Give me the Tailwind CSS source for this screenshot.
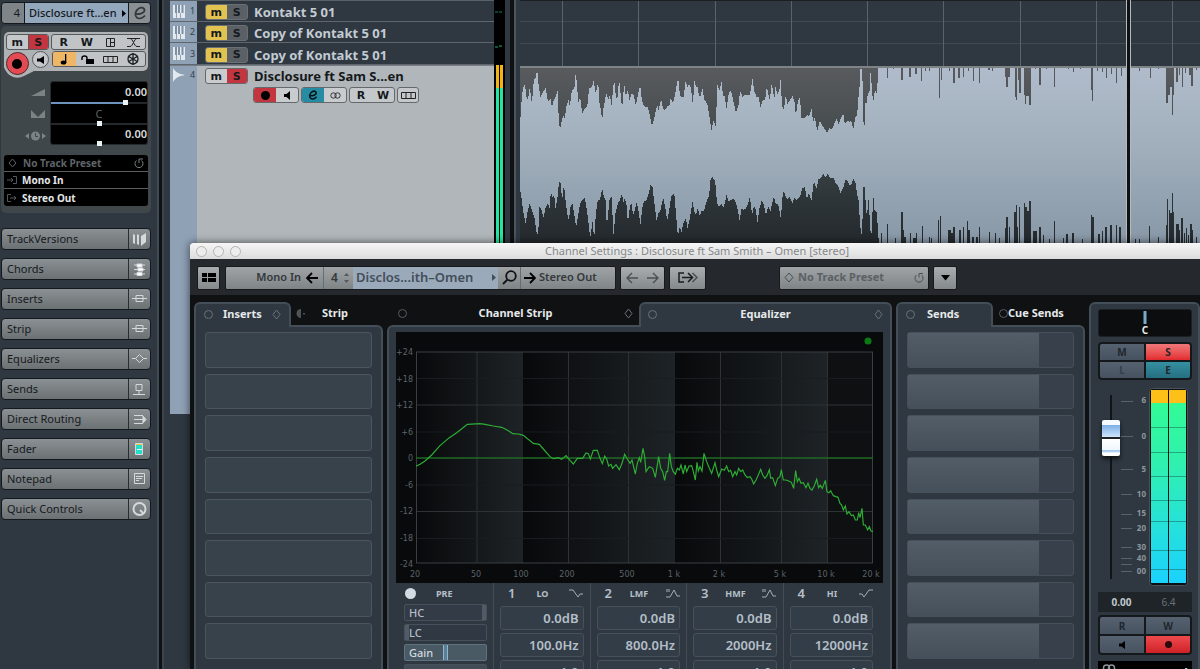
<!DOCTYPE html>
<html lang="en">
<head>
  <meta charset="UTF-8">
  <meta name="viewport" content="width=device-width, initial-scale=1.0">
  <title>Channel Settings : Disclosure ft Sam Smith - Omen</title>
  <script src="https://cdn.jsdelivr.net/npm/@tailwindcss/browser@4"></script>
</head>
<body class="relative flex h-screen overflow-hidden bg-[#2f3841] font-['Noto_Sans',sans-serif] text-[11px] text-[#15191c]">

  <!-- Inspector -->
  <aside class="flex w-[157px] shrink-0 flex-col bg-[#2f3841] pl-px pt-[2px]">
    <header class="flex h-[22px] w-[150px] overflow-hidden rounded-[4px] border border-[#15191d]">
      <span class="w-[23px] border-r border-[#15191d] bg-[#7f8488] pr-1 text-right leading-5">4</span>
      <button class="flex flex-1 items-center justify-between whitespace-nowrap bg-[#93a7bd] pl-1 pr-[2px] text-[11px] font-medium leading-5">Disclosure ft…en
        <svg class="h-[7px] w-[4px]" viewBox="0 0 4 7"><path d="M0 0l4 3.500-4 3.500z"/></svg>
      </button>
      <button class="flex w-[22px] shrink-0 items-center justify-center border-l border-[#15191d] bg-[#8a8f93]" aria-label="Edit channel">
        <svg class="h-[14px] w-[14px]" viewBox="0 0 14 14" fill="none" stroke="#33393e" stroke-width="1.800"><path d="M2 8C6 8.500 12 7 11.500 4 11 1 7 .8 4.500 3.500 2 6 1.500 10 4 11.800c2.500 1.500 6 0 8-2.300"/></svg>
      </button>
    </header>

    <section class="mt-[2px] w-[150px] rounded-[5px] bg-[#40474b] px-[3px] pb-[7px] pt-[6px]">
      <div class="relative h-[39px] rounded-[5px] bg-[#aeb2b4] pr-[2px] pt-[2px]">
        <svg class="absolute left-0 top-[18px] h-[30px] w-[50px]" viewBox="0 0 50 30" fill="#aeb2b4"><path d="M0 14a13.500 13.500 0 0 0 20 12l10-5h20V0H0z"/></svg>
        <div class="relative flex justify-between pl-[2px] font-['DejaVu_Sans',sans-serif] font-bold">
          <div class="flex h-4 w-[43px] overflow-hidden rounded-[3px] border border-[#55595c] bg-[#c4c8ca]">
            <button class="w-1/2 leading-[13px]">m</button>
            <button class="w-1/2 border-l border-[#55595c] bg-[#c4363f] leading-[13px]">S</button>
          </div>
          <div class="grid h-4 w-[95px] grid-cols-4 items-center justify-items-center rounded-[3px] border border-[#55595c] bg-[#c0c4c6]">
            <button class="leading-[13px]">R</button>
            <button class="leading-[13px]">W</button>
            <button aria-label="Lanes"><svg class="h-[9px] w-[9px]" viewBox="0 0 9 9" fill="none" stroke="#222"><path d="M.5.5h8v8h-8zM4.500.5v8M4.500 4.500h4"/></svg></button>
            <button aria-label="Crossfade"><svg class="h-[9px] w-[13px]" viewBox="0 0 13 9" fill="none" stroke="#222"><path d="M0 .5h3c3 0 4 8 7 8h3M13 .5h-3c-3 0-4 8-7 8H0M2 .5h9"/></svg></button>
          </div>
        </div>
        <div class="relative mt-px flex items-start gap-[3px] pl-[2px]">
          <button class="mt-px flex h-[23px] w-[23px] items-center justify-center rounded-full border border-[#4a2a2d] bg-[#e34a52]" aria-label="Record"><span class="h-[10px] w-[10px] rounded-full bg-black"></span></button>
          <button class="flex h-[17px] w-[17px] items-center justify-center rounded-full border border-[#55595c] bg-[#c4c8ca]" aria-label="Monitor"><svg class="h-2 w-[7px]" viewBox="0 0 7 8"><path d="M0 2.500h3L7 0v8L3 5.500H0z"/></svg></button>
          <div class="ml-auto grid h-4 w-[95px] grid-cols-4 overflow-hidden rounded-[3px] border border-[#55595c] bg-[#c0c4c6]">
            <button class="flex items-center justify-center bg-[#efb765]" aria-label="Time base"><svg class="h-[11px] w-2" viewBox="0 0 8 11"><path d="M5 0h1.300v9H5z"/><ellipse cx="3.500" cy="8.500" rx="2.800" ry="2"/></svg></button>
            <button class="flex items-center justify-center" aria-label="Lock"><svg class="h-[9px] w-[13px]" viewBox="0 0 13 9"><path d="M5 4h8v5H5z"/><path d="M1 5V3a2.500 2 0 0 1 5 0v1.500" fill="none" stroke="#000" stroke-width="1.400"/></svg></button>
            <button class="flex items-center justify-center" aria-label="Takes"><svg class="h-[7px] w-[15px]" viewBox="0 0 15 7" fill="none" stroke="#222"><path d="M.5.5h14v6H.5zM5 .5v6M10 .5v6"/></svg></button>
            <button class="flex items-center justify-center" aria-label="Freeze"><svg class="h-3 w-3" viewBox="0 0 12 12" fill="none" stroke="#1c1f21" stroke-width="1.300"><circle cx="6" cy="6" r="5"/><path d="M6 0v12M1 3l10 6M11 3L1 9"/></svg></button>
          </div>
        </div>
      </div>

      <div class="mt-[10px] flex">
        <div class="flex w-[46px] shrink-0 flex-col items-end gap-[10px] pr-1 pt-[5px]">
          <svg class="h-3 w-[17px]" viewBox="0 0 17 12" fill="#7d8284"><path d="M2 10L16 3v7z"/></svg>
          <svg class="h-3 w-[17px]" viewBox="0 0 17 12" fill="#7d8284"><path d="M2 2l7 7 7-7v8H2z"/></svg>
          <svg class="h-3 w-[21px]" viewBox="0 0 21 12" fill="#7d8284"><path d="M0 6l4-3v6zM21 6l-4-3v6z"/><circle cx="10.500" cy="6" r="4.500"/><path d="M10.500 3v3.500H13" fill="none" stroke="#40474b"/></svg>
        </div>
        <div class="flex h-[64px] flex-1 flex-col rounded-[3px] border border-[#252a2d] bg-black text-[11px] font-semibold text-[#d8dcdf]">
          <label for="vol" class="h-[18px] text-right leading-[19px]">0.00</label>
          <input id="vol" type="range" value="79" class="h-[5px] w-full appearance-none bg-[linear-gradient(90deg,#6d94bf_76%,#23272a_76%)] bg-[length:100%_2px] bg-center bg-no-repeat [&::-webkit-slider-thumb]:h-[5px] [&::-webkit-slider-thumb]:w-[5px] [&::-webkit-slider-thumb]:appearance-none [&::-webkit-slider-thumb]:bg-[#e9f3f5]">
          <label for="pan" class="h-[16px] text-center font-normal leading-[17px] text-[#5d6366]">C</label>
          <input id="pan" type="range" value="50" class="h-[5px] w-full appearance-none bg-[linear-gradient(#25292c,#25292c)] bg-[length:100%_2px] bg-center bg-no-repeat [&::-webkit-slider-thumb]:h-[5px] [&::-webkit-slider-thumb]:w-[5px] [&::-webkit-slider-thumb]:appearance-none [&::-webkit-slider-thumb]:bg-[#e9f3f5]">
          <label for="delay" class="h-[15px] text-right leading-[15px]">0.00</label>
          <input id="delay" type="range" value="50" class="h-[5px] w-full appearance-none bg-transparent [&::-webkit-slider-thumb]:h-[5px] [&::-webkit-slider-thumb]:w-[5px] [&::-webkit-slider-thumb]:appearance-none [&::-webkit-slider-thumb]:bg-[#e9f3f5]">
        </div>
      </div>

      <div class="mt-[10px] divide-y divide-[#5a5e61] rounded-[3px] bg-black text-[10px] font-bold leading-4 text-[#e4e7e9]">
        <button class="flex h-[17px] w-full items-center px-1 text-[#5f6467]">
          <svg class="mr-[6px] h-[10px] w-[9px]" viewBox="0 0 9 10" fill="none" stroke="#5f6467"><path d="M4.500 1L8 5 4.500 9 1 5z"/></svg>
          No Track Preset
          <svg class="ml-auto h-[10px] w-[10px]" viewBox="0 0 10 10" fill="none" stroke="#7a7f82"><path d="M2.500 2.500a4 4 0 1 0 5 0M5 5V1h4"/></svg>
        </button>
        <button class="flex h-[17px] w-full items-center px-[3px]">
          <svg class="mr-[5px] h-2 w-[10px]" viewBox="0 0 10 8" fill="none" stroke="#55595c"><path d="M0 4h6M4 2l2 2-2 2M6 .5h3.500v7H6"/></svg>Mono In
        </button>
        <button class="flex h-[17px] w-full items-center px-[3px]">
          <svg class="mr-[5px] h-2 w-[10px]" viewBox="0 0 10 8" fill="none" stroke="#55595c"><path d="M3 4h6M7 2l2 2-2 2M4 .5H.5v7H4"/></svg>Stereo Out
        </button>
      </div>
    </section>

    <nav id="sections" class="mt-[15px] flex w-[150px] flex-col gap-2"></nav>
  </aside>

  <div class="w-[7px] shrink-0 border-l-2 border-r-2 border-[#414b56] border-r-[#3b4550] bg-[#0f1112]"></div>

  <!-- Track list -->
  <main class="ml-[6px] flex w-[335px] shrink-0">
    <div class="flex-1">
      <div id="tracks" class="border-t border-[#5a6067]"></div>
      <div class="flex h-[349px] border-t border-[#767c83] bg-[#b0b6ba]">
        <div class="flex w-[27px] shrink-0 items-start gap-[5px] bg-[#8fa1b5] pl-[3px]">
          <svg class="mt-[2px] h-[14px] w-[12px]" viewBox="0 0 12 14" fill="#e4e9ee"><path d="M0 0c3 5 7 6 12 7-5 1-9 2-12 7z"/></svg>
          <span class="text-[9px] leading-[18px] text-[#333f4c]">4</span>
        </div>
        <div class="pl-[8px] pt-[2px] font-['DejaVu_Sans',sans-serif] font-bold">
          <div class="flex items-center">
            <div class="flex h-4 w-[43px] overflow-hidden rounded-[3px] border border-[#66696c] bg-[#c9ccce]">
              <button class="w-1/2 leading-[13px]">m</button>
              <button class="w-1/2 bg-[#c4363f] leading-[13px]">S</button>
            </div>
            <span class="ml-[6px] font-['Noto_Sans',sans-serif] text-[13px] font-bold leading-4">Disclosure ft Sam S...en</span>
          </div>
          <div class="ml-[48px] mt-[3px] flex gap-[2px]">
            <div class="flex h-4 w-[46px] overflow-hidden rounded-[3px] border border-[#66696c] bg-[#c9ccce]">
              <button class="flex w-1/2 items-center justify-center bg-[#c4363f]" aria-label="Record"><span class="h-[9px] w-[9px] rounded-full bg-black"></span></button>
              <button class="flex w-1/2 items-center justify-center" aria-label="Monitor"><svg class="h-[9px] w-[6px]" viewBox="0 0 6 9"><path d="M0 3h2.500L6 0v9L2.500 6H0z"/></svg></button>
            </div>
            <div class="flex h-4 w-[46px] overflow-hidden rounded-[3px] border border-[#66696c] bg-[#c9ccce]">
              <button class="flex w-1/2 items-center justify-center bg-[#258ca3]" aria-label="Edit channel"><svg class="h-[10px] w-[10px]" viewBox="0 0 14 14" fill="none" stroke="#001418" stroke-width="2.200"><path d="M2 8C6 8.500 12 7 11.500 4 11 1 7 .8 4.500 3.500 2 6 1.500 10 4 11.800c2.500 1.500 6 0 8-2.300"/></svg></button>
              <button class="flex w-1/2 items-center justify-center" aria-label="Stereo"><svg class="h-[7px] w-[11px]" viewBox="0 0 11 7" fill="none" stroke="#333"><circle cx="3.500" cy="3.500" r="2.700"/><circle cx="7.500" cy="3.500" r="2.700"/></svg></button>
            </div>
            <div class="flex h-4 w-[46px] rounded-[3px] border border-[#66696c] bg-[#c4c8ca]">
              <button class="w-1/2 leading-[13px]">R</button>
              <button class="w-1/2 leading-[13px]">W</button>
            </div>
            <button class="flex h-4 w-[22px] items-center justify-center rounded-[3px] border border-[#66696c] bg-[#c4c8ca]" aria-label="Takes"><svg class="h-[7px] w-[15px]" viewBox="0 0 15 7" fill="none" stroke="#222"><path d="M.5.5h14v6H.5zM5 .5v6M10 .5v6"/></svg></button>
          </div>
        </div>
      </div>
    </div>
    <div class="h-[414px] w-[11px] bg-black">
      <svg class="h-[243px] w-[11px]" viewBox="0 0 11 243">
        <path d="M1 12h3M5 12h3" stroke="#1b7d6c"/><path d="M1 47h3M5 46h3" stroke="#1fae6e"/>
        <path d="M2 65h3v23H2zM6 65h3v23H6z" fill="#f3b313"/><path d="M2 88h3v155H2zM6 88h3v155H6z" fill="#25e6a0"/>
      </svg>
    </div>
  </main>

  <div class="ml-[5px] mr-1 w-[6px] shrink-0 border-r-2 border-[#4a5560] bg-[#0f1112]"></div>

  <!-- Event display -->
  <svg class="h-[243px] min-w-0 flex-1" viewBox="0 0 680 243" preserveAspectRatio="none" shape-rendering="crispEdges">
    <defs>
      <linearGradient id="clip" x1="0" y1="0" x2="0" y2="1"><stop offset="0" stop-color="#595b5f"/><stop offset=".4" stop-color="#454b4d"/><stop offset=".75" stop-color="#2e3539"/><stop offset="1" stop-color="#24292d"/></linearGradient>
      <linearGradient id="audio" gradientUnits="userSpaceOnUse" x1="0" y1="200" x2="0" y2="730"><stop offset="0" stop-color="#b0bccb"/><stop offset=".45" stop-color="#a1afbc"/><stop offset="1" stop-color="#8898a7"/></linearGradient>
    </defs>
    <path d="M0 .5h680" stroke="#1c1f22"/>
    <path d="M0 21.500h680M0 43h680" stroke="#3f4a52"/>
    <g id="barlines"></g>
    <rect y="66" width="680" height="177" fill="url(#clip)"/>
    <g transform="translate(-10 0) scale(.33333)"><path id="wave" fill="url(#audio)"/></g>
    <path d="M0 67h680" stroke="#7e8386" stroke-width="2"/>
    <path d="M608.500 0v243" stroke="#0f1214" stroke-width="3"/>
    <path d="M606.500 0v243M610.500 0v243" stroke="#b4b9bc"/>
  </svg>

  <!-- Channel settings window -->
  <section class="absolute bottom-0 left-[190px] right-0 top-[243px] flex flex-col overflow-hidden rounded-tl-[3px] bg-[#0f1112] shadow-[0_0_8px_rgba(0,0,0,.6)]">
    <header class="relative flex h-4 shrink-0 items-center justify-center bg-linear-to-b from-[#f6f6f6] to-[#dcdcdc] pl-1 text-[11px] leading-4 text-[#85888a]">
      <div class="absolute left-[6px] flex gap-[6px]">
        <button class="h-[11px] w-[11px] rounded-full border border-[#b3b3b3] bg-[#ededed]" aria-label="Close"></button>
        <button class="h-[11px] w-[11px] rounded-full border border-[#b3b3b3] bg-[#ededed]" aria-label="Minimize"></button>
        <button class="h-[11px] w-[11px] rounded-full border border-[#b3b3b3] bg-[#ededed]" aria-label="Zoom"></button>
      </div>
      <h1>Channel Settings : Disclosure ft Sam Smith – Omen [stereo]</h1>
    </header>

    <div class="flex h-9 shrink-0 items-center bg-[#25292d] pl-[7px] pt-px text-[11px] font-semibold text-[#33383b]">
      <button class="flex h-6 w-[23px] items-center justify-center rounded-[2px] border border-[#17191b] bg-linear-to-b from-[#a9adb0] to-[#84898c]" aria-label="Layout">
        <svg class="h-[9px] w-[14px]" viewBox="0 0 14 9"><path d="M0 0h5v4H0zM0 5h5v4H0zM6 0h8v4H6zM6 5h8v4H6z"/></svg>
      </button>
      <div class="ml-[5px] flex h-6 w-[391px] rounded-[2px] border border-[#17191b] bg-linear-to-b from-[#a0a4a7] to-[#7f8487]">
        <button class="flex w-[97px] items-center justify-end gap-[5px] pr-[5px]">Mono In
          <svg class="h-3 w-3" viewBox="0 0 12 12" fill="none" stroke="#000" stroke-width="1.800"><path d="M12 6H1M6 1L1 6l5 5"/></svg>
        </button>
        <button class="flex w-[30px] items-center justify-between border-l border-[#686d70] pl-[7px] pr-1 text-[12px]">4
          <svg class="h-[10px] w-[5px]" viewBox="0 0 5 10" fill="#55595c"><path d="M0 3l2.500-3L5 3zM0 7l2.500 3L5 7z"/></svg>
        </button>
        <button class="flex w-[145px] items-center justify-between bg-[#9aaabb] pl-[3px] pr-[2px] text-[13px] font-semibold text-[#444e58]">Disclos...ith–Omen
          <svg class="h-[7px] w-[4px]" viewBox="0 0 4 7" fill="#444e58"><path d="M0 0l4 3.500-4 3.500z"/></svg>
        </button>
        <button class="flex w-[23px] items-center justify-center border-r border-[#686d70]" aria-label="Find channel">
          <svg class="h-[15px] w-[15px]" viewBox="0 0 15 15" fill="none" stroke="#101214" stroke-width="1.800"><circle cx="9" cy="6" r="4.800"/><path d="M5.500 9.500L1 14"/></svg>
        </button>
        <button class="flex flex-1 items-center gap-[3px] whitespace-nowrap pl-[3px]">
          <svg class="h-3 w-3" viewBox="0 0 12 12" fill="none" stroke="#000" stroke-width="1.800"><path d="M0 6h11M6 1l5 5-5 5"/></svg>Stereo Out
        </button>
      </div>
      <div class="ml-[4px] flex h-6 w-[45px] items-center justify-around rounded-[2px] border border-[#17191b] bg-linear-to-b from-[#a9adb0] to-[#84898c]">
        <button aria-label="Previous"><svg class="h-3 w-3" viewBox="0 0 12 12" fill="none" stroke="#4a4f53" stroke-width="1.400"><path d="M12 6H1M6 1L1 6l5 5"/></svg></button>
        <button aria-label="Next"><svg class="h-3 w-3" viewBox="0 0 12 12" fill="none" stroke="#4a4f53" stroke-width="1.400"><path d="M0 6h11M6 1l5 5-5 5"/></svg></button>
      </div>
      <button class="ml-1 flex h-6 w-[37px] items-center justify-center rounded-[2px] border border-[#17191b] bg-linear-to-b from-[#a9adb0] to-[#84898c]" aria-label="Output chain">
        <svg class="h-[11px] w-[20px]" viewBox="0 0 20 11" fill="none" stroke="#1a1c1e" stroke-width="1.500"><path d="M6 1H1v9h5M4 5.500h10"/><path d="M10 1l4.500 4.500L10 10"/><path d="M14.500 1L19 5.500 14.500 10" stroke="#4a4f53"/></svg>
      </button>
      <button class="ml-[73px] flex h-6 w-[150px] items-center rounded-[2px] border border-[#17191b] bg-linear-to-b from-[#a0a4a7] to-[#7f8487] px-[4px] font-bold text-[#5b6063]">
        <svg class="mr-1 h-[11px] w-[10px]" viewBox="0 0 10 11" fill="none" stroke="#4a4f53"><path d="M5 1l4 4.500L5 10 1 5.500z"/></svg>
        No Track Preset
        <svg class="ml-auto h-[11px] w-[10px]" viewBox="0 0 10 10" fill="none" stroke="#4a4f53"><path d="M2.500 2.500a4 4 0 1 0 5 0M5 5V1h4"/></svg>
      </button>
      <button class="ml-1 flex h-6 w-6 items-center justify-center rounded-[2px] border border-[#17191b] bg-linear-to-b from-[#a9adb0] to-[#84898c]" aria-label="Preset menu">
        <svg class="h-[6px] w-[9px]" viewBox="0 0 9 6"><path d="M0 0h9L4.500 5.500z"/></svg>
      </button>
    </div>

    <div class="flex min-h-0 flex-1 gap-1 pl-1 pt-[7px] text-[11px] font-bold text-[#e6e9eb]">
      <!-- Inserts -->
      <div class="flex w-[189px] shrink-0 flex-col">
        <div class="flex h-[23px] shrink-0">
          <button class="relative z-10 -mb-[2px] flex w-[97px] items-center rounded-t-[6px] border-2 border-b-0 border-[#434e59] bg-[#2f3841] px-2 pb-[2px]">
            <span class="h-[9px] w-[9px] rounded-full border-[1.500px] border-[#67727b]"></span>
            <span class="ml-[10px]">Inserts</span>
            <svg class="ml-auto h-[11px] w-[9px]" viewBox="0 0 9 11" fill="none" stroke="#67727b"><path d="M4.500 1L8 5.500l-3.500 4.500L1 5.500z"/></svg>
          </button>
          <button class="flex flex-1 items-center gap-[17px] pl-[5px]">
            <svg class="h-[9px] w-[9px]" viewBox="0 0 9 9" fill="#4d5357"><path d="M5 0v9a4.500 4.500 0 0 1 0-9z"/><path d="M7 4h2v1.500H7z"/></svg>Strip
          </button>
        </div>
        <div class="flex-1 rounded-tr-[6px] border-2 border-b-0 border-[#434e59] bg-[#2f3841] px-[9px] pt-[5px]">
          <div id="inserts" class="flex h-[327px] flex-col gap-[6px]"></div>
        </div>
      </div>

      <!-- Equalizer -->
      <div class="flex min-w-0 flex-1 flex-col">
        <div class="flex h-[23px] shrink-0">
          <button class="flex w-[252px] items-center justify-between pl-[11px] pr-[6px]">
            <span class="h-[9px] w-[9px] rounded-full border-[1.500px] border-[#565c60]"></span>
            <span>Channel Strip</span>
            <svg class="h-[11px] w-[9px]" viewBox="0 0 9 11" fill="none" stroke="#67727b"><path d="M4.500 1L8 5.500l-3.500 4.500L1 5.500z"/></svg>
          </button>
          <button class="relative z-10 -mb-[2px] flex flex-1 items-center justify-between rounded-t-[6px] border-2 border-b-0 border-[#434e59] bg-[#2f3841] px-[7px] pb-[2px]">
            <span class="h-[9px] w-[9px] rounded-full border-[1.500px] border-[#67727b]"></span>
            <span>Equalizer</span>
            <svg class="h-[11px] w-[9px]" viewBox="0 0 9 11" fill="none" stroke="#67727b"><path d="M4.500 1L8 5.500l-3.500 4.500L1 5.500z"/></svg>
          </button>
        </div>
        <div class="flex-1 rounded-tl-[6px] border-2 border-b-0 border-[#434e59] bg-[#2f3841] px-[7px] pt-[5px]">
          <svg class="w-full bg-[#090a0c]" viewBox="0 0 487 251">
            <defs>
              <linearGradient id="dec"><stop offset="0" stop-color="#08090a"/><stop offset="1" stop-color="#1e2327"/></linearGradient>
            </defs>
            <rect x="20" y="20" width="107" height="211" fill="url(#dec)"/>
            <rect x="127" y="20" width="152" height="211" fill="url(#dec)"/>
            <rect x="279" y="20" width="152" height="211" fill="url(#dec)"/>
            <rect x="431" y="20" width="46" height="211" fill="#0e1012"/>
            <path d="M81 20v211M172.500 20v211M232.500 20v211M324.500 20v211M385.500 20v211M431.500 20v211M20 73h457M20 179.500h457" stroke="#2d3236"/>
            <path d="M20 46.500h457M20 100h457M20 153h457M20 206.500h457" stroke="#191d20"/>
            <rect x="20.500" y="20" width="456" height="211" fill="none" stroke="#3a3f43"/>
            <path d="M20 126h457" stroke="#1f6a26" stroke-width="1.500"/>
            <circle cx="472" cy="9" r="3.500" fill="#0b7a14"/>
            <path id="spectrum" transform="translate(-6 -7) scale(.33333)" fill="none" stroke="#2fae35" stroke-width="3.500"/>
            <g id="ticks" class="fill-[#5c6468] font-['DejaVu_Sans',sans-serif] text-[8px] font-normal"></g>
          </svg>
          <div class="flex h-[120px] pr-[4px] text-[#b4bfc8]">
            <div class="w-[97px] shrink-0 pl-[8px] pr-[6px]">
              <div class="flex h-[21px] items-center">
                <button class="ml-px h-[11px] w-[11px] rounded-full bg-[#d3dbe2]" aria-label="Pre on"></button>
                <span class="ml-[20px] text-[9px] leading-4">PRE</span>
              </div>
              <div class="flex flex-col gap-[3px] text-[11px] font-medium leading-[15px]">
                <button class="flex h-[17px] justify-between rounded-[2px] border border-[#46515c] bg-[#333c46] pl-1">HC<span class="h-full w-[4px] bg-[#505b66]"></span></button>
                <button class="flex h-[17px] rounded-[2px] border border-[#46515c] bg-[#303943]"><span class="h-full w-[4px] bg-[#505b66]"></span>LC</button>
                <button class="flex h-[17px] rounded-[2px] border border-[#5f7480] bg-[#4a5a65] pl-1 text-[#d0d9df]"><span class="w-[34px] text-left">Gain</span><span class="h-full w-[5px] border-x border-[#8fb6cb] bg-[#5a7f95]"></span></button>
                <button class="h-[17px] rounded-[2px] border border-[#46515c] bg-[#424c56]" aria-label="Phase"></button>
              </div>
            </div>
            <div id="bands" class="grid flex-1 grid-cols-4"></div>
          </div>
        </div>
      </div>

      <!-- Sends -->
      <div class="flex w-[189px] shrink-0 flex-col">
        <div class="flex h-[23px] shrink-0">
          <button class="relative z-10 -mb-[2px] flex w-[97px] items-center rounded-t-[6px] border-2 border-b-0 border-[#434e59] bg-[#2f3841] px-2 pb-[2px]">
            <span class="h-[9px] w-[9px] rounded-full border-[1.500px] border-[#67727b]"></span>
            <span class="ml-[12px]">Sends</span>
          </button>
          <button class="flex flex-1 items-center pl-[6px]">
            <span class="h-[9px] w-[9px] shrink-0 rounded-full border-[1.500px] border-[#565c60]"></span>
            <span class="whitespace-nowrap">Cue Sends</span>
          </button>
        </div>
        <div class="flex-1 rounded-tr-[6px] border-2 border-b-0 border-[#434e59] bg-[#2f3841] px-[9px] pt-[5px]">
          <div id="sends" class="flex h-[327px] flex-col gap-[6px]"></div>
        </div>
      </div>

      <!-- Fader strip -->
      <div class="w-[111px] shrink-0 rounded-t-[6px] border-2 border-b-0 border-[#434e59] bg-[#2f3841] pl-[7px] pr-[6px] pt-[5px] text-[10px]">
        <button class="flex h-7 w-full flex-col items-center rounded-[3px] border border-[#1b2025] bg-[#0b0d0f] pt-px leading-[13px]"><span class="h-[13px] w-1 shrink-0 rounded-[1px] border-x border-[#3c5f75] bg-[#7fa9c2]"></span>C</button>
        <div class="mt-[5px] grid h-[38px] grid-cols-2 grid-rows-2 gap-[2px] overflow-hidden rounded-[4px] border-2 border-[#14181b] bg-[#14181b] text-[10px] leading-4 text-[#20262c]">
          <button class="bg-linear-to-b from-[#56626f] to-[#465260]">M</button>
          <button class="bg-linear-to-b from-[#f0777a] to-[#e2282e]">S</button>
          <button class="bg-linear-to-b from-[#56626f] to-[#465260] text-[#343e48]">L</button>
          <button class="bg-linear-to-b from-[#3590a1] to-[#256f80]">E</button>
        </div>
        <div class="mt-2 flex">
          <input type="range" value="83" aria-label="Volume" class="ml-[3px] mt-[7px] h-[184px] w-[20px] appearance-none bg-[linear-gradient(#111417,#111417)] bg-[length:2px_100%] bg-center bg-no-repeat [direction:rtl] [writing-mode:vertical-lr] [&::-webkit-slider-thumb]:h-[36px] [&::-webkit-slider-thumb]:w-[18px] [&::-webkit-slider-thumb]:appearance-none [&::-webkit-slider-thumb]:rounded-[2px] [&::-webkit-slider-thumb]:bg-[linear-gradient(#f4faff_14%,#7db0e8_15%,#cfe4fa_47%,#222_48%,#222_52%,#fff_53%,#eef6fd_84%,#8cb8ea_85%,#fff_92%)] [&::-webkit-slider-thumb]:shadow-[0_3px_4px_#0f1214]">
          <svg class="h-[198px] w-[28px]" viewBox="0 0 28 198">
            <path d="M-5 13.500h17M-5 48.500h17M-5 81.500h17M-5 106.500h16M-5 126.500h16M-5 140.500h16M-5 159.500h16M-5 170.500h16M-5 176.500h16M-5 183.500h16" stroke="#58626b"/>
            <g id="dbmarks" class="fill-[#8d969d] text-[8px] [text-anchor:end]"></g>
          </svg>
          <svg class="h-[198px] w-[39px]" viewBox="0 0 39 198">
            <defs><linearGradient id="level" x1="0" y1="0" x2="0" y2="1"><stop offset="0" stop-color="#32fb96"/><stop offset=".35" stop-color="#2ff0b0"/><stop offset=".7" stop-color="#25e0dc"/><stop offset="1" stop-color="#1ad2fd"/></linearGradient></defs>
            <rect x=".5" y=".5" width="38" height="197" rx="3" fill="#0d1012" stroke="#48525c"/>
            <rect x="2" y="2" width="35" height="13" fill="#fdc019"/>
            <rect x="2" y="15" width="35" height="180" fill="url(#level)"/>
            <path d="M2 39.500h35M2 64.500h35M2 88.500h35M2 112.500h35M2 133.500h35M2 162.500h35M2 181.500h35" stroke="#1c5a52" stroke-opacity=".5"/>
            <path d="M19.500 2v193" stroke="#0d1012"/>
          </svg>
        </div>
        <div class="mt-[6px] grid h-5 grid-cols-2 items-center bg-[#1f2429] text-center text-[10px] leading-5 text-[#c0c8ce]"><span>0.00</span><span class="font-normal text-[#68717a]">6.4</span></div>
        <div class="mt-[3px] grid h-[40px] grid-cols-2 grid-rows-2 gap-[2px] overflow-hidden rounded-[4px] border-2 border-[#14181b] bg-[#14181b] leading-4 text-[#20262c]">
          <button class="bg-linear-to-b from-[#56626f] to-[#465260]">R</button>
          <button class="bg-linear-to-b from-[#56626f] to-[#465260]">W</button>
          <button class="flex items-center justify-center bg-linear-to-b from-[#56626f] to-[#465260]" aria-label="Monitor"><svg class="h-[8px] w-[6px]" viewBox="0 0 6 8"><path d="M0 2.500h2.500L6 0v8L2.500 5.500H0z"/></svg></button>
          <button class="flex items-center justify-center bg-linear-to-b from-[#ee4a4e] to-[#cf1f27]" aria-label="Record"><span class="h-[7px] w-[7px] rounded-full bg-[#2a0b0d]"></span></button>
        </div>
        <div class="mt-[6px] flex h-5 items-start justify-between bg-black px-1 pt-[3px]">
          <svg class="h-2 w-[14px]" viewBox="0 0 14 8" fill="none" stroke="#8d9499" stroke-width="1.500"><circle cx="4.500" cy="4" r="3"/><circle cx="9.500" cy="4" r="3"/></svg>
          <span class="leading-4">4</span>
        </div>
      </div>
    </div>
  </section>

  <script>
    const byId = id => document.getElementById(id);

    // inspector sections
    const sections = [
      ["TrackVersions", '<path d="M1 2l2 1v9l-2-1zM5 2l2 1v10l-2-1zM9 4l5-3v9l-5 4z" fill="#d5d9dc" stroke="none"/>'],
      ["Chords", '<path d="M2 3h11M2 7.500h11M2 12h11"/><path d="M5 2h5v3H5zM6 6h5v3H6zM5 10.500h5v3H5z" fill="#fff"/>'],
      ["Inserts", '<path d="M0 6.500h4M11 6.500h4M4 3.500h7v6H4zM4 6.500h7"/>'],
      ["Strip", '<path d="M0 6.500h4M11 6.500h4M4 3.500h7v6H4zM4 6.500h7"/>'],
      ["Equalizers", '<path d="M0 6.500h3.500M11.500 6.500H15M7.500 2.500l4 4-4 4-4-4z"/>'],
      ["Sends", '<path d="M4 2.500h6v6H4zM7 8.500v4M1 12.500h12"/>'],
      ["Direct Routing", '<path d="M2 3.500h9M2 7.500h11M2 11.500h9"/><path d="M11 4l3 3.500-3 3.500z" fill="#d5d9dc"/>'],
      ["Fader", '<path d="M3.500 1.500h7v11h-7z" fill="#22e0c8"/><path d="M4 2.500h6" stroke="#f3c33a"/><path d="M5 7.500h5" stroke="#e8f4ff"/>'],
      ["Notepad", '<path d="M2.500 1.500h10v10h-10zM4 4.500h7M4 6.500h6M4 8.500h3"/>'],
      ["Quick Controls", '<circle cx="7.500" cy="7" r="6" stroke-width="2"/><path d="M8 8l3 3" stroke-width="2"/>']
    ];
    byId("sections").innerHTML = sections.map(([name, icon]) => `
      <button class="flex h-[22px] overflow-hidden rounded-[4px] border border-[#15191d] bg-linear-to-b from-[#8b9094] to-[#6c7174]">
        <span class="flex-1 pl-[5px] text-left leading-5">${name}</span>
        <span class="flex h-full w-[22px] items-center justify-center border-l border-[#2a2e31]">
          <svg class="h-[15px] w-[15px]" viewBox="0 0 15 15" fill="none" stroke="#d5d9dc">${icon}</svg>
        </span>
      </button>`).join("");

    // instrument tracks
    byId("tracks").innerHTML = ["Kontakt 5 01", "Copy of Kontakt 5 01", "Copy of Kontakt 5 01"].map((name, i) => `
      <div class="flex h-[21px] items-center border-b border-[#5f666e] bg-[#2f3841] last:h-[22px]">
        <div class="flex h-full w-[27px] items-center gap-[5px] bg-[#8fa1b5] pl-[3px]">
          <svg class="h-[13px] w-[12px]" viewBox="0 0 12 13"><path d="M0 0h12v13H0z" fill="#e4e9ee"/><path d="M2 0h2v8H2zM5 0h2v8H5zM8.500 0h2v8h-2z" fill="#7d8fa3"/><path d="M3.500 8v5M7.500 8v5" stroke="#8fa1b5"/></svg>
          <span class="text-[9px] leading-4 text-[#333f4c]">${i + 1}</span>
        </div>
        <div class="flex h-full items-center pl-[8px] pt-[2px]">
          <div class="flex h-4 w-[43px] overflow-hidden rounded-[3px] border border-[#6a6f73] bg-[#5a6066] font-['DejaVu_Sans',sans-serif] font-bold">
            <button class="w-1/2 bg-[#e2c352] leading-[13px]">m</button>
            <button class="w-1/2 leading-[13px]">S</button>
          </div>
          <span class="ml-[6px] text-[13px] font-bold leading-4 text-[#c3cbd3]">${name}</span>
        </div>
      </div>`).join("");

    // insert and send slots
    byId("inserts").innerHTML = '<button class="flex-1 rounded-[3px] border border-[#4a5560] bg-[#38424b]" aria-label="Insert slot"></button>'.repeat(8);
    byId("sends").innerHTML = `<button class="flex flex-1 rounded-[3px] border border-[#46505a] bg-[#38414b]" aria-label="Send slot">
      <span class="h-full w-[131px] bg-linear-to-b from-[#535d67] to-[#46505a]"></span></button>`.repeat(8);

    // eq bands
    const bands = [
      ["LO", "100.0Hz", '<path d="M0 1h4l5 7 2-3h3"/>'],
      ["LMF", "800.0Hz", '<path d="M1 0v3M3 0v3M0 8h4l4-7 3 6h3"/>'],
      ["HMF", "2000Hz", '<path d="M1 0v3M3 0v3M0 8h4l4-7 3 6h3"/>'],
      ["HI", "12000Hz", '<path d="M0 5h3l2 3 5-7h4"/>']
    ];
    byId("bands").innerHTML = bands.map(([name, freq, icon], i) => `
      <div class="border-l border-[#414c57] px-[6px]">
        <div class="flex h-[23px] items-center justify-between pb-[2px] pl-2">
          <span class="text-[13px] font-semibold">${i + 1}</span>
          <span class="text-[9px]">${name}</span>
          <svg class="h-[9px] w-[14px]" viewBox="0 0 14 9" fill="none" stroke="#a3aeb7">${icon}</svg>
        </div>
        <div class="flex flex-col gap-[3px] text-[13px] font-semibold">
          <button class="h-6 rounded-[3px] border border-[#46515c] bg-[#333d47] pr-1 text-right leading-[22px]">0.0dB</button>
          <button class="h-6 rounded-[3px] border border-[#46515c] bg-[#333d47] pr-1 text-right leading-[22px]">${freq}</button>
          <button class="h-6 rounded-[3px] border border-[#46515c] bg-[#333d47] pr-1 text-right leading-[22px]">1.0</button>
        </div>
      </div>`).join("");

    // eq axis labels
    const gains = ["+24", "+18", "+12", "+6", "0", "-6", "-12", "-18", "-24"];
    const freqs = [[19, "20"], [80, "50"], [125, "100"], [171, "200"], [231, "500"], [278, "1 k"], [323, "2 k"], [384, "5 k"], [430, "10 k"], [475, "20 k"]];
    byId("ticks").innerHTML =
      gains.map((g, i) => `<text x="17" y="${23 + i * 26.5}" text-anchor="end">${g}</text>`).join("") +
      freqs.map(([x, f]) => `<text x="${x}" y="245" text-anchor="middle">${f}</text>`).join("");

    byId("dbmarks").innerHTML = [[15, "6"], [51, "0"], [84, "5"], [109, "10"], [128, "15"], [143, "20"], [162, "30"], [173, "40"], [186, "00"]]
      .map(([y, t]) => `<text x="25" y="${y}">${t}</text>`).join("");

    // measured spectrum
    const spectrum = "78,424 90,418 105,408 125,390 150,362 178,338 200,323 232,298 270,296 285,298 310,303 335,307 350,314 368,326 385,327 400,331 430,355 448,358 460,372 480,395 490,401 505,398 515,403 528,392 540,406 550,417 562,400 578,400 588,384 595,386 601,402 610,376 622,376 630,400 637,416 644,393 650,402 656,423 663,418 668,430 678,419 688,434 696,415 704,388 712,402 720,415 726,405 736,447 742,415 748,398 752,412 759,370 764,395 768,440 778,425 788,430 796,457 806,395 812,430 818,440 824,466 829,440 833,440 839,385 844,425 850,440 856,448 862,430 868,435 873,420 880,447 885,420 890,440 897,423 905,422 910,440 916,465 921,412 925,438 930,425 936,438 942,385 950,410 958,430 965,445 975,413 980,435 986,455 995,432 1003,436 1010,423 1016,440 1022,436 1028,455 1035,440 1040,450 1046,430 1052,440 1058,435 1065,450 1072,458 1080,455 1085,462 1091,477 1098,465 1104,452 1112,433 1118,450 1125,460 1131,452 1138,434 1142,460 1148,458 1156,482 1163,460 1170,455 1174,434 1180,465 1188,465 1196,468 1204,472 1211,490 1217,437 1222,470 1227,460 1233,475 1240,473 1248,488 1254,475 1260,490 1266,495 1273,482 1280,463 1286,488 1291,480 1297,490 1306,466 1311,500 1317,503 1322,497 1330,512 1338,515 1344,517 1350,535 1355,540 1360,555 1366,543 1371,567 1377,560 1384,572 1390,570 1396,585 1402,585 1406,563 1410,578 1416,550 1420,600 1426,600 1433,615 1438,605 1443,618 1449,620";
    byId("spectrum").setAttribute("d", "M" + spectrum.replaceAll(" ", "L"));

    // bar lines
    let bars = "";
    for (let x = 42.5; x < 680; x += 76.25) bars += `<path d="M${x} 1v65" stroke="#56646f"/>`;
    byId("barlines").innerHTML = bars;

    // waveform envelopes: quiet intro as a contour, loud part as dips from full scale
    const pairs = s => s.split(" ").map(p => p.split(",").map(Number));
    const upper = pairs("30,350 34,290 38,262 43,253 48,290 52,300 58,262 64,310 70,240 75,235 80,208 85,262 90,290 98,275 106,264 112,305 120,298 124,322 130,300 136,290 141,272 144,340 148,390 152,370 158,345 163,355 168,318 174,300 178,318 184,272 188,268 192,262 196,212 200,265 204,305 209,292 215,340 222,328 230,320 236,265 244,262 250,240 254,278 258,270 263,246 267,310 270,325 275,360 279,325 285,290 289,280 293,300 298,285 303,315 308,265 311,238 316,290 320,300 326,238 331,290 335,325 341,250 346,290 352,270 357,300 363,282 370,285 376,318 383,280 389,255 394,300 400,318 406,322 412,322 418,345 424,378 430,360 436,330 440,315 444,330 452,298 458,328 464,330 471,318 476,320 481,293 487,310 492,290 496,270 503,232 508,285 513,290 519,290 526,240 530,262 536,253 541,262 547,315 552,242 557,262 560,255 565,285 571,290 575,262 582,300 590,310 596,345 603,390 609,362 616,380 618,320 621,255 627,270 633,246 638,290 641,283 648,325 655,280 661,270 668,300 676,338 684,315 689,272 696,290 703,285 711,285 718,285 722,262 726,238 732,275 738,290 744,290 750,320 757,300 764,300 769,258 773,280 778,300 783,255 787,265 791,300 795,262 800,282 806,275 810,240 815,318 820,328 826,285 831,312 838,300 846,288 852,305 856,345 862,305 868,290 873,355 880,355 885,352 890,345 895,350 903,328 908,368 913,350 920,395 928,362 935,375 943,388 950,398 957,385 965,388 972,370 979,355 984,372 990,358 998,340 1003,372 1010,362 1016,365 1022,362 1028,388 1035,350 1040,345 1043,300 1047,262 1050,208 1055,208 1057,280 1059,365 1062,375 1064,310 1069,308 1073,268 1076,300 1079,220 1082,220 1084,280 1089,300 1093,270 1099,280 1104,204 2070,204");
    const lower = pairs("30,575 34,600 38,635 45,670 52,630 58,610 64,630 72,655 80,708 84,680 87,620 92,628 100,655 104,625 112,610 117,625 121,575 126,590 131,585 135,625 140,600 144,562 149,537 153,580 157,595 160,548 165,600 170,640 175,660 180,620 186,612 191,640 197,682 204,640 209,610 215,600 223,592 228,625 232,650 236,690 240,708 246,665 251,718 256,640 262,600 268,600 275,565 280,590 285,600 289,680 293,640 297,600 303,590 309,702 315,640 322,610 328,600 334,582 339,605 343,595 348,615 352,668 357,630 362,605 368,645 374,625 379,605 385,640 390,672 395,625 400,605 408,600 414,582 420,555 426,562 431,605 438,660 444,640 450,630 458,592 464,620 470,662 476,630 482,590 491,578 496,635 502,708 508,680 513,695 520,665 526,655 531,685 537,660 546,605 552,635 556,645 562,625 568,650 574,630 580,635 588,605 596,585 600,540 605,530 612,540 616,560 619,605 625,622 632,612 640,622 648,585 655,605 662,600 670,595 677,610 682,630 688,665 692,625 700,630 706,625 712,612 718,592 725,645 730,618 736,630 741,665 747,625 754,600 760,615 766,645 773,620 780,632 790,590 796,612 803,612 811,655 816,590 820,572 826,590 832,598 838,590 845,610 852,595 858,600 868,590 876,565 883,560 889,598 895,580 903,600 910,545 918,565 924,538 933,532 938,522 945,530 952,522 960,535 968,532 975,548 982,555 990,578 998,565 1004,540 1010,540 1016,555 1022,555 1028,535 1035,548 1040,585 1044,600 1048,660 1052,710 1055,690 1059,560 1063,560 1067,640 1071,630 1074,600 1078,660 1082,725 1085,650 1089,595 1093,640 1097,625 1101,670 1105,730 2070,730");
    // x, depth, width
    const upperDips = "97,235,3 115,207,3 140,240,4 165,230,4 182,222,6 199,243,3 210,212,3 222,214,3 253,295,4 258,240,3 283,212,3 296,250,5 312,235,6 326,230,3 340,214,3 355,243,3 373,248,3 402,210,6 411,212,3 452,230,4 456,262,4 461,230,5 481,290,5 485,300,3 490,240,4 494,278,4 509,285,5 512,312,3 518,288,9 524,315,4 541,208,5 555,256,4 573,208,3 598,260,4 640,208,4 656,216,3 676,207,3 709,270,3 712,303,4 728,214,3 742,216,4 753,235,3 769,222,3 784,248,3 799,228,3 826,215,4 853,214,3 885,235,3 910,208,3 936,308,5 941,285,5 947,262,5 952,345,3 955,285,3 966,245,5 973,225,3 981,260,3 992,220,3 1005,225,4 1010,258,5 1025,210,3";
    const lowerDips = "80,698,3 97,672,3 120,714,3 140,637,4 144,690,3 150,712,6 165,700,3 178,714,6 183,698,3 201,678,3 222,712,3 230,714,3 250,660,3 256,648,3 283,690,6 289,700,6 296,682,4 314,690,4 326,682,3 337,663,4 342,690,4 353,710,4 366,712,6 373,680,5 402,695,3 421,698,3 434,714,3 451,685,4 456,652,4 463,682,4 480,635,5 484,615,4 488,680,3 493,622,4 508,608,5 513,620,5 519,632,6 524,602,4 536,694,4 543,692,4 555,682,4 565,704,5 583,716,3 598,663,4 625,714,3 636,702,4 654,698,4 682,716,3 709,645,3 714,650,4 731,702,4 742,692,4 753,682,5 768,675,4 784,675,3 794,682,4 826,675,4 840,718,3 852,718,3 883,678,4 910,712,5 935,675,4 938,598,3 943,630,5 948,640,5 953,578,3 956,635,3 967,672,6 973,690,4 981,655,4 987,700,3 993,685,3 1000,705,3 1008,672,5 1013,690,3 1025,712,3";

    function columns(points, dips, deeper) {
      const cuts = pairs(dips);
      const out = [];
      let k = 0;
      for (let x = 30; x < 2070; x += 3) {
        while (k < points.length - 2 && points[k + 1][0] < x) k++;
        const [x0, y0] = points[k];
        const [x1, y1] = points[k + 1];
        let y = y0 + (y1 - y0) * (x - x0) / (x1 - x0);
        cuts.forEach(([cx, cy, w]) => {
          if (Math.abs(x + 1 - (cx + 1035)) <= w / 2) y = deeper(y, cy);
        });
        out.push([x, Math.round(y)], [x + 3, Math.round(y)]);
      }
      return out;
    }
    const outline = columns(upper, upperDips, Math.max).concat(columns(lower, lowerDips, Math.min).reverse());
    byId("wave").setAttribute("d", "M" + outline.map(p => p.join(",")).join("L") + "Z");
  </script>
</body>
</html>
